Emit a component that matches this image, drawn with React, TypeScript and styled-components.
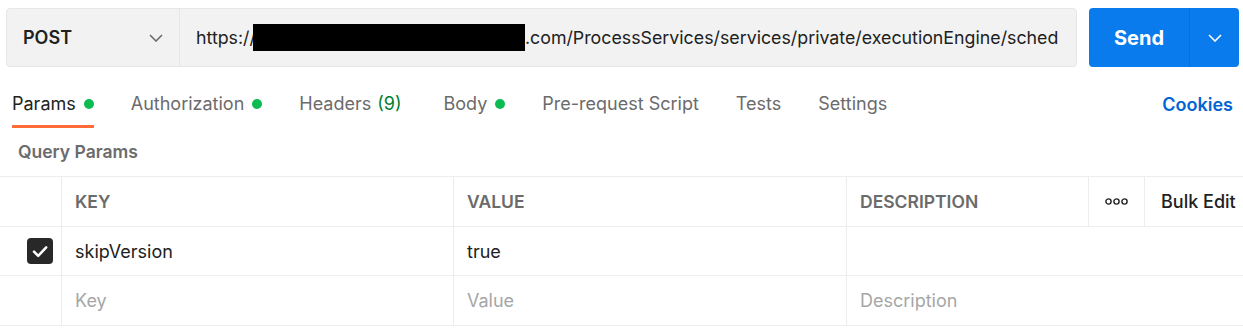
import React from "react";
import styled, { createGlobalStyle } from "styled-components";

const GlobalStyle = createGlobalStyle`
  body {
    margin: 0;
    background: #ffffff;
    font-family: Inter, "Noto Sans", sans-serif;
    color: #212121;
  }
  * {
    box-sizing: border-box;
  }
`;

const Page = styled.div`
  width: 1243px;
  height: 334px;
  overflow: hidden;
  background: #ffffff;
`;

const RequestBar = styled.div`
  display: flex;
  gap: 12px;
  height: 59px;
  margin: 8px 4px 0 6px;
`;

const UrlGroup = styled.div`
  flex: 1;
  display: flex;
  background: #f2f2f2;
  border: 1px solid #e6e6e6;
  border-radius: 4px;
  overflow: hidden;
`;

const MethodSelect = styled.div`
  width: 173px;
  display: flex;
  align-items: center;
  justify-content: space-between;
  padding: 0 16px 0 16px;
  border-right: 1px solid #e6e6e6;
  font-size: 18px;
  font-weight: 600;
  color: #212121;
`;

const UrlText = styled.div`
  flex: 1;
  display: flex;
  align-items: center;
  padding-left: 16px;
  font-size: 17.8px;
  color: #212121;
  white-space: nowrap;
  overflow: hidden;
`;

// redaction bar overlaps the tail of the second slash
const Redacted = styled.span`
  display: inline-block;
  width: 272px;
  height: 27px;
  margin-left: -3px;
  background: #000000;
`;

const SendButton = styled.div`
  width: 150px;
  display: flex;
  background: #097bed;
  border-radius: 4px;
  color: #ffffff;
`;

const SendLabel = styled.div`
  width: 101px;
  display: flex;
  align-items: center;
  justify-content: center;
  font-size: 20px;
  font-weight: 700;
  border-right: 1px solid #0a6fd6;
`;

const SendMore = styled.div`
  flex: 1;
  display: flex;
  align-items: center;
  justify-content: center;
`;

const TabBar = styled.div`
  display: flex;
  align-items: stretch;
  gap: 37px;
  height: 48px;
  margin-top: 13px;
  padding: 0 10px 0 12px;
`;

const Tab = styled.div<{ $active?: boolean; $extra?: number }>`
  display: flex;
  align-items: center;
  gap: 8px;
  padding-top: 2px;
  margin-right: ${(p) => p.$extra ?? 0}px;
  font-size: 18px;
  color: ${(p) => (p.$active ? "#212121" : "#6b6b6b")};
  border-bottom: 3px solid ${(p) => (p.$active ? "#ff6c37" : "transparent")};
  white-space: nowrap;
`;

const Dot = styled.span`
  width: 10px;
  height: 10px;
  border-radius: 50%;
  background: #0cbb52;
`;

const Count = styled.span`
  color: #007f31;
  margin-left: -2px;
`;

const Cookies = styled.div`
  margin-left: auto;
  display: flex;
  align-items: center;
  font-size: 18px;
  font-weight: 600;
  color: #0265d2;
`;

const SectionTitle = styled.div`
  height: 48px;
  display: flex;
  align-items: center;
  padding-left: 18px;
  padding-bottom: 1px;
  font-size: 17.5px;
  font-weight: 600;
  color: #6b6b6b;
`;

const Table = styled.div`
  display: grid;
  grid-template-columns: 61px 392px 393px 1fr;
  grid-template-rows: 50px 49px 50px;
  border-bottom: 1px solid #ededed;
`;

const Cell = styled.div<{ $head?: boolean; $placeholder?: boolean; $first?: boolean }>`
  display: flex;
  align-items: center;
  padding-left: ${(p) => (p.$first ? 0 : 13)}px;
  border-top: 1px solid #ededed;
  border-left: ${(p) => (p.$first ? "none" : "1px solid #ededed")};
  font-size: ${(p) => (p.$head ? 17.5 : 18)}px;
  font-weight: ${(p) => (p.$head ? 600 : 400)};
  color: ${(p) =>
    p.$head ? "#6b6b6b" : p.$placeholder ? "#a6a6a6" : "#212121"};
`;

const CheckCell = styled(Cell)`
  justify-content: flex-end;
  padding-right: 8px;
`;

const HeadDescCell = styled(Cell)`
  padding-left: 0;
`;

const HeadDesc = styled.div`
  flex: 1;
  padding-left: 13px;
`;

const MoreCell = styled.div`
  width: 56px;
  height: 100%;
  display: flex;
  align-items: center;
  justify-content: center;
  border-left: 1px solid #ededed;
`;

const BulkEdit = styled.div`
  width: 99px;
  height: 100%;
  display: flex;
  align-items: center;
  padding-left: 16px;
  border-left: 1px solid #ededed;
  color: #212121;
  font-size: 18px;
  font-weight: 500;
  white-space: nowrap;
`;

const Checkbox = styled.div`
  width: 26px;
  height: 26px;
  border-radius: 4px;
  background: #282828;
  display: flex;
  align-items: center;
  justify-content: center;
`;

const Chevron = ({ color }: { color: string }) => (
  <svg width="14" height="8" viewBox="0 0 14 8" fill="none">
    <path d="M1 1l6 6 6-6" stroke={color} strokeWidth="1.6" />
  </svg>
);

const Dots = () => (
  <svg width="23" height="7" viewBox="0 0 23 7" fill="none">
    <circle cx="3.5" cy="3.5" r="2.6" stroke="#212121" strokeWidth="1.4" />
    <circle cx="11.5" cy="3.5" r="2.6" stroke="#212121" strokeWidth="1.4" />
    <circle cx="19.5" cy="3.5" r="2.6" stroke="#212121" strokeWidth="1.4" />
  </svg>
);

const tabs = [
  { label: "Params", dot: true, active: true },
  { label: "Authorization", dot: true },
  { label: "Headers", count: "(9)", extra: 5 },
  { label: "Body", dot: true },
  { label: "Pre-request Script" },
  { label: "Tests" },
  { label: "Settings" },
];

export default function App() {
  return (
    <Page>
      <GlobalStyle />
      <RequestBar>
        <UrlGroup>
          <MethodSelect>
            <span>POST</span>
            <Chevron color="#6b6b6b" />
          </MethodSelect>
          <UrlText>
            https://<Redacted />
            .com/ProcessServices/services/private/executionEngine/sched
          </UrlText>
        </UrlGroup>
        <SendButton>
          <SendLabel>Send</SendLabel>
          <SendMore>
            <Chevron color="#ffffff" />
          </SendMore>
        </SendButton>
      </RequestBar>

      <TabBar>
        {tabs.map((t) => (
          <Tab key={t.label} $active={t.active} $extra={t.extra}>
            <span>{t.label}</span>
            {t.count && <Count>{t.count}</Count>}
            {t.dot && <Dot />}
          </Tab>
        ))}
        <Cookies>Cookies</Cookies>
      </TabBar>

      <SectionTitle>Query Params</SectionTitle>

      <Table>
        <Cell $first />
        <Cell $head>KEY</Cell>
        <Cell $head>VALUE</Cell>
        <HeadDescCell $head>
          <HeadDesc>DESCRIPTION</HeadDesc>
          <MoreCell>
            <Dots />
          </MoreCell>
          <BulkEdit>Bulk Edit</BulkEdit>
        </HeadDescCell>

        <CheckCell $first>
          <Checkbox>
            <svg width="16" height="13" viewBox="0 0 16 13" fill="none">
              <path
                d="M2 6.7l4.2 4.2 8-8.6"
                stroke="#ffffff"
                strokeWidth="2.5"
                strokeLinecap="round"
                strokeLinejoin="round"
              />
            </svg>
          </Checkbox>
        </CheckCell>
        <Cell>skipVersion</Cell>
        <Cell>true</Cell>
        <Cell />

        <Cell $first />
        <Cell $placeholder>Key</Cell>
        <Cell $placeholder>Value</Cell>
        <Cell $placeholder>Description</Cell>
      </Table>
    </Page>
  );
}
